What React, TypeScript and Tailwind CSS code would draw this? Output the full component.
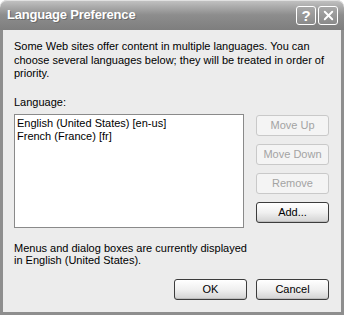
import { X } from 'lucide-react';

function WinButton({ label, disabled }: { label: string; disabled?: boolean }) {
  return (
    <button
      type="button"
      disabled={disabled}
      className={`h-[21px] w-[73px] rounded-[3px] border text-[11px] leading-none ${
        disabled
          ? 'border-[#c9c9c9] bg-[#f4f4f4] text-[#a3a3a3]'
          : 'border-[#3c3c3c] bg-gradient-to-b from-white via-[#f0f0f0] to-[#d2d2d2] text-black shadow-[inset_0_-1px_0_#bdbdbd]'
      }`}
    >
      {label}
    </button>
  );
}

export default function App() {
  const languages = ['English (United States) [en-us]', 'French (France) [fr]'];

  return (
    <div
      className="flex h-[315px] w-[344px] flex-col bg-white text-black"
      style={{ fontFamily: '"Liberation Sans", Arial, sans-serif' }}
    >
      {/* title bar */}
      <div className="flex h-[30px] shrink-0 items-center justify-between rounded-t-[7px] bg-gradient-to-b from-[#c4c4c4] via-[#8d8d8d] to-[#7e7e7e] pl-[7px] pr-[6px] shadow-[inset_0_1px_0_#e0e0e0]">
        <span className="text-[13px] font-bold tracking-[-0.2px] text-white [text-shadow:1px_1px_0_#6a6a6a]">
          Language Preference
        </span>
        <div className="flex gap-[2px]">
          <div className="flex h-[19px] w-[20px] items-center justify-center rounded-[3px] border border-white bg-gradient-to-b from-[#a8a8a8] to-[#8a8a8a] text-[15px] font-bold leading-none text-white">
            ?
          </div>
          <div className="flex h-[19px] w-[20px] items-center justify-center rounded-[3px] border border-white bg-gradient-to-b from-[#a8a8a8] to-[#8a8a8a] text-white">
            <X size={15} strokeWidth={3} />
          </div>
        </div>
      </div>

      {/* body */}
      <div className="flex flex-1 flex-col border-[3px] border-t-0 border-[#8e8e8e] bg-[#ececec] pl-[11px] pr-[12px] text-[11px]">
        <p className="mt-[10px] leading-[13.5px]">
          Some Web sites offer content in multiple languages. You can
          <br />
          choose several languages below; they will be treated in order of
          <br />
          priority.
        </p>

        <p className="mt-[15px] leading-[13px]">Language:</p>

        <div className="mt-[5px] flex">
          <div className="h-[114px] w-[230px] border border-[#8a8a8a] bg-white px-[2px] pt-[2px] leading-[13px]">
            {languages.map((lang) => (
              <div key={lang}>{lang}</div>
            ))}
          </div>
          <div className="ml-[12px] mt-[1px] flex flex-col gap-[8px]">
            <WinButton label="Move Up" disabled />
            <WinButton label="Move Down" disabled />
            <WinButton label="Remove" disabled />
            <WinButton label="Add..." />
          </div>
        </div>

        <p className="mt-[14px] leading-[12.5px]">
          Menus and dialog boxes are currently displayed
          <br />
          in English (United States).
        </p>

        <div className="mt-[12px] flex justify-end gap-[9px]">
          <WinButton label="OK" />
          <WinButton label="Cancel" />
        </div>
      </div>
    </div>
  );
}
